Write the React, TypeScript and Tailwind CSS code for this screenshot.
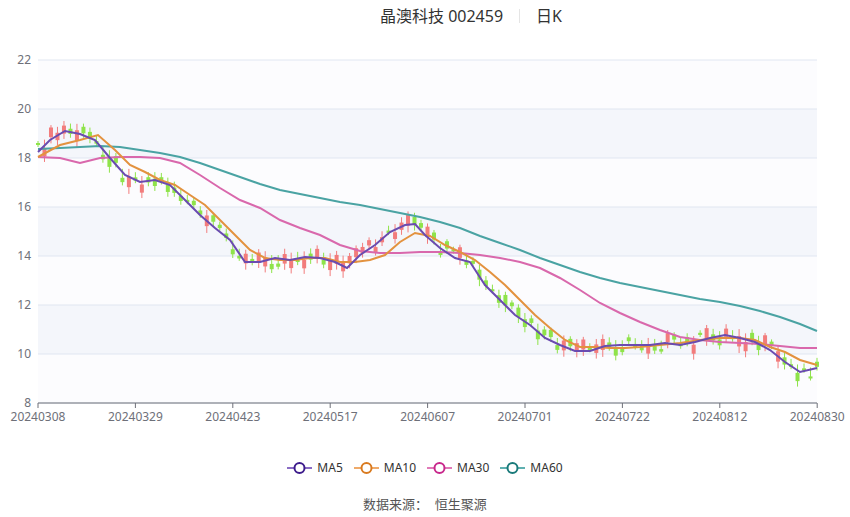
import React from "react";

type P = [number, number];
const ma5: P[] = [[38,152],[50,140],[65,131],[80,134],[95,140],[110,158],[125,175],[140,182],[155,180],[170,185],[185,200],[200,215],[215,228],[230,240],[245,262],[260,262],[275,258],[290,260],[305,257],[320,258],[335,262],[347,268],[360,255],[375,245],[390,232],[405,225],[415,224],[425,235],[440,248],[455,258],[470,262],[485,285],[500,300],[515,315],[530,325],[545,338],[560,345],[575,351],[590,351],[605,346],[620,345],[635,345],[650,345],[665,343],[680,345],[695,342],[710,338],[725,335],[740,338],[755,342],[770,350],[785,362],[800,372],[817,368]];
const ma10: P[] = [[38,157],[60,145],[80,140],[98,135],[115,150],[130,165],[145,172],[160,180],[175,185],[190,195],[205,205],[220,220],[235,235],[250,250],[265,258],[280,260],[295,260],[310,258],[325,258],[340,262],[355,262],[370,260],[385,255],[400,242],[415,233],[430,236],[445,245],[460,252],[475,260],[490,272],[505,285],[520,300],[535,315],[550,328],[565,340],[580,347],[595,347],[610,348],[625,348],[640,347],[660,345],[680,343],[700,340],[720,338],[740,338],[755,340],[770,347],[785,352],[800,360],[817,365]];
const ma30: P[] = [[38,157],[60,158],[80,163],[100,158],[120,157],[140,157],[160,158],[180,163],[200,175],[220,188],[240,200],[260,208],[280,220],[300,228],[320,235],[340,245],[360,251],[380,253],[400,253],[420,252],[440,252],[460,253],[480,255],[500,258],[520,262],[540,268],[560,278],[580,290],[600,303],[620,313],[640,322],[660,330],[680,337],[700,340],[720,342],[740,343],[760,344],[780,346],[800,348],[817,348]];
const ma60: P[] = [[38,149],[60,148],[80,147],[100,146],[120,147],[140,150],[160,153],[180,157],[200,163],[220,170],[240,177],[260,184],[280,190],[300,194],[320,198],[340,202],[360,205],[380,209],[400,213],[420,217],[440,222],[460,228],[480,236],[500,243],[520,250],[540,258],[560,265],[580,272],[600,278],[620,283],[640,287],[660,291],[680,295],[700,299],[720,302],[740,306],[760,311],[780,317],[800,324],[817,331]];

const interp = (pts: P[], x: number) => {
  for (let i = 1; i < pts.length; i++) {
    if (x <= pts[i][0]) {
      const [x0, y0] = pts[i - 1], [x1, y1] = pts[i];
      return y0 + ((y1 - y0) * (x - x0)) / (x1 - x0);
    }
  }
  return pts[pts.length - 1][1];
};
const toPath = (pts: P[]) => pts.map((p, i) => `${i ? "L" : "M"}${p[0]},${p[1]}`).join(" ");

const candles = Array.from({ length: 121 }, (_, i) => {
  const x = 38 + (i * 779) / 120;
  const base = interp(ma5, x);
  const slope = interp(ma5, x + 6) - interp(ma5, x - 6);
  const n1 = Math.sin(i * 12.9898) * 43758.5453;
  const r1 = n1 - Math.floor(n1);
  const n2 = Math.sin(i * 78.233) * 12345.678;
  const r2 = n2 - Math.floor(n2);
  const mid = base + (r1 - 0.5) * 16;
  const body = 2 + r2 * 9;
  const up = r2 + slope * -0.03 > 0.6;
  const top = mid - body / 2;
  const bot = mid + body / 2;
  return { x, top, bot, hi: top - 2 - r1 * 7, lo: bot + 2 + r2 * 5, up };
});

const yTicks = [22, 20, 18, 16, 14, 12, 10, 8];
const yOf = (v: number) => 60 + (22 - v) * 24.5;
const xLabels = ["20240308","20240329","20240423","20240517","20240607","20240701","20240722","20240812","20240830"];

const legend = [
  { n: "MA5", c: "#3d1c8c", l: "#8a6cc4" },
  { n: "MA10", c: "#d97a1f", l: "#efaa6a" },
  { n: "MA30", c: "#c8288c", l: "#e07ab8" },
  { n: "MA60", c: "#1a7a7a", l: "#5fb0b0" },
];

export default function App() {
  return (
    <div className="w-[850px] h-[517px] bg-white flex flex-col" style={{ fontFamily: '"Noto Sans", "Noto Sans CJK SC", sans-serif' }}>
      <div className="h-[34px] flex items-start justify-center pt-[5px] pl-[92px] text-[16px] text-[#333] leading-[22px]">
        <span>晶澳科技 002459</span>
        <span className="mx-[16px] mt-[4px] w-px h-[14px] bg-[#e5e5e5]" />
        <span>日K</span>
      </div>
      <svg width="850" height="406" viewBox="0 34 850 406" className="block">
        {[0,1,2,3,4,5,6].map((i) => (
          <rect key={i} x={38} y={60 + i * 49} width={779} height={49} fill={i % 2 === 0 ? "#fcfcfe" : "#f4f6fb"} />
        ))}
        {yTicks.map((v) => (
          <g key={v}>
            <line x1={38} x2={817} y1={yOf(v)} y2={yOf(v)} stroke="#e0e6f1" />
            <text x={31} y={yOf(v) + 4} textAnchor="end" fontSize="12" fill="#6e7079">{v}</text>
          </g>
        ))}
        {xLabels.map((l, i) => (
          <g key={l}>
            <line x1={38 + i * 97.4} x2={38 + i * 97.4} y1={403} y2={408} stroke="#6e7079" />
            <text x={38 + i * 97.4} y={421} textAnchor="middle" fontSize="12" fill="#6e7079">{l}</text>
          </g>
        ))}
        <line x1={38} x2={817} y1={403} y2={403} stroke="#6e7079" />
        {candles.map((c, i) => {
          const col = c.up ? "#f27c7c" : "#8fe34a";
          return (
            <g key={i}>
              <line x1={c.x} x2={c.x} y1={c.hi} y2={c.lo} stroke={col} />
              <rect x={c.x - 2} y={c.top} width={4} height={c.bot - c.top} fill={col} />
            </g>
          );
        })}
        <path d={toPath(ma60)} fill="none" stroke="#4aa3a3" strokeWidth="2" />
        <path d={toPath(ma30)} fill="none" stroke="#d968ac" strokeWidth="2" />
        <path d={toPath(ma10)} fill="none" stroke="#e3923f" strokeWidth="2" />
        <path d={toPath(ma5)} fill="none" stroke="#6a4bb0" strokeWidth="2" />
      </svg>
      <div className="h-[55px] flex items-center justify-center gap-[11px] text-[12px] text-[#333]">
        {legend.map((g) => (
          <div key={g.n} className="flex items-center gap-[5px]">
            <svg width="25" height="14">
              <line x1="0" x2="25" y1="7" y2="7" stroke={g.l} strokeWidth="2" />
              <circle cx="12.5" cy="7" r="5" fill="white" stroke={g.c} strokeWidth="2" />
            </svg>
            <span>{g.n}</span>
          </div>
        ))}
      </div>
      <div className="flex justify-center text-[13px] text-[#555]">
        <span>数据来源：&nbsp;&nbsp;恒生聚源</span>
      </div>
    </div>
  );
}
